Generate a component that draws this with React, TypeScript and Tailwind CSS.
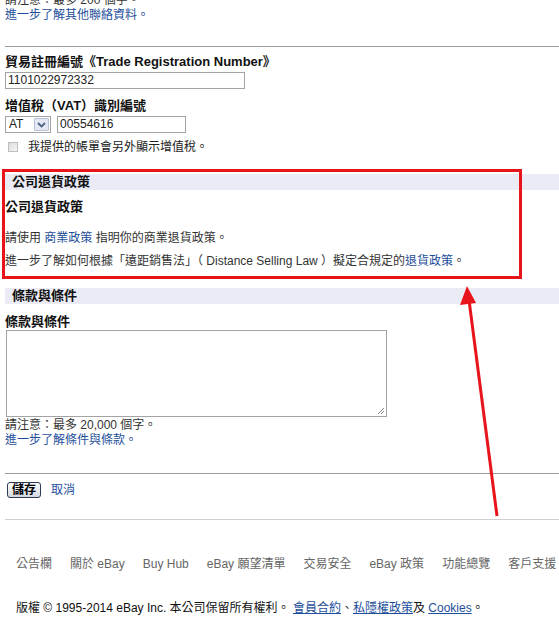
import React from "react";

const footerLinks = ["公告欄", "關於 eBay", "Buy Hub", "eBay 願望清單", "交易安全", "eBay 政策", "功能總覽", "客戶支援"];

export default function App() {
  return (
    <div className="relative w-[559px] h-[618px] overflow-hidden bg-white text-[12px] text-[#333] font-['Liberation_Sans','Noto_Sans_CJK_TC',sans-serif]">
      {/* --- TOP (CONTACT NOTE) --- */}
      <div className="pl-[5px] -mt-[7px] leading-[15px]">
        <p>請注意：最多 200 個字。</p>
        <a className="text-[#1d4e9a]">進一步了解其他聯絡資料。</a>
      </div>

      <div className="ml-[5px] mt-[23px] border-t border-[#9a9a9a]" />

      {/* --- TRADE REGISTRATION --- */}
      <div className="pl-[5px]">
        <p className="mt-[7px] h-[16px] leading-[16px] text-[13px] font-bold text-[#111]">貿易註冊編號《Trade Registration Number》</p>
        <div className="mt-[2px] w-[240px] h-[17px] border border-[#a3a3a3] px-[2px] text-[12px] leading-[15px] text-[#222]">1101022972332</div>

        <p className="mt-[9px] h-[16px] leading-[16px] text-[13px] font-bold text-[#111]">增值稅（VAT）識別編號</p>
        <div className="mt-[2px] flex items-center gap-[6px]">
          <div className="flex w-[46px] h-[17px] border border-[#a3a3a3] items-center justify-between pl-[3px] pr-[1px]">
            <span className="leading-[15px] text-[#222]">AT</span>
            <span className="flex items-center justify-center w-[15px] h-[13px] border border-[#b7c2d6] bg-[#e3e9f4] rounded-[1px]">
              <svg width="9" height="6" viewBox="0 0 9 6">
                <path d="M1 1 L4.5 4.5 L8 1" fill="none" stroke="#4d6185" strokeWidth="1.8" />
              </svg>
            </span>
          </div>
          <div className="w-[129px] h-[17px] border border-[#a3a3a3] px-[2px] leading-[15px] text-[#222]">00554616</div>
        </div>

        <div className="mt-[7px] h-[14px] flex items-center">
          <span className="ml-[3px] w-[10px] h-[10px] border border-[#bdbdbd] bg-gradient-to-br from-[#dcdcdc] to-[#f6f6f6]" />
          <span className="ml-[10px] leading-[14px] text-[#222]">我提供的帳單會另外顯示增值稅。</span>
        </div>
      </div>

      {/* --- RETURN POLICY --- */}
      <div className="ml-[5px] mt-[20px] h-[16px] bg-[#ebebf5] pl-[7px] text-[13px] font-bold leading-[16px] text-[#111]">公司退貨政策</div>
      <div className="pl-[5px]">
        <p className="mt-[9px] h-[16px] leading-[16px] text-[13px] font-bold text-[#111]">公司退貨政策</p>
        <p className="mt-[15px] h-[16px] leading-[16px]">
          請使用 <a className="text-[#1d4e9a]">商業政策</a> 指明你的商業退貨政策。
        </p>
        <p className="mt-[7px] h-[16px] leading-[16px] whitespace-nowrap">
          進一步了解如何根據「遠距銷售法」（ Distance Selling Law ）擬定合規定的<a className="text-[#1d4e9a]">退貨政策</a>。
        </p>
      </div>

      {/* --- TERMS --- */}
      <div className="ml-[5px] mt-[19px] h-[16px] bg-[#ebebf5] pl-[7px] text-[13px] font-bold leading-[16px] text-[#111]">條款與條件</div>
      <div className="pl-[5px]">
        <p className="mt-[10px] h-[16px] leading-[16px] text-[13px] font-bold text-[#111]">條款與條件</p>
        <div className="relative ml-[1px] w-[381px] h-[87px] border border-[#a3a3a3]">
          <svg className="absolute right-[1px] bottom-[1px]" width="8" height="8" viewBox="0 0 8 8">
            <path d="M7 1 L1 7 M7 4 L4 7" stroke="#888" strokeWidth="1" />
          </svg>
        </div>
        <div className="mt-[1px] leading-[15px]">
          <p>請注意：最多 20,000 個字。</p>
          <a className="text-[#1d4e9a]">進一步了解條件與條款。</a>
        </div>
      </div>

      <div className="ml-[5px] mt-[25px] border-t border-[#9a9a9a]" />

      <div className="pl-[7px] mt-[8px] flex items-center gap-[10px]">
        <button className="h-[16px] w-[34px] border border-[#2e3a55] rounded-[3px] bg-gradient-to-b from-white to-[#d3d7e0] text-[12px] leading-[14px] font-bold text-black">儲存</button>
        <a className="text-[#1d4e9a] leading-[16px]">取消</a>
      </div>

      <div className="ml-[5px] mt-[21px] border-t border-[#cfcfcf]" />

      {/* --- FOOTER --- */}
      <div className="mt-[36px] pl-[16px] flex gap-[18px] h-[16px] leading-[16px] text-[#666] whitespace-nowrap">
        {footerLinks.map((l) => (
          <span key={l}>{l}</span>
        ))}
      </div>
      <p className="mt-[28px] pl-[16px] h-[16px] leading-[16px] text-[#111] whitespace-nowrap">
        版權 © 1995-2014 eBay Inc. 本公司保留所有權利。 <a className="text-[#1d4e9a] underline">會員合約</a>、<a className="text-[#1d4e9a] underline">私隱權政策</a>及 <a className="text-[#1d4e9a] underline">Cookies</a>。
      </p>

      {/* --- ANNOTATION OVERLAY --- */}
      <div className="absolute left-[2px] top-[169px] w-[520px] h-[110px] border-[3px] border-[#e8141b]" />
      <svg className="absolute left-0 top-0 pointer-events-none" width="559" height="618" viewBox="0 0 559 618">
        <line x1="497" y1="516" x2="469" y2="300" stroke="#e8141b" strokeWidth="3" />
        <polygon points="467,286 460,305 476,303" fill="#e8141b" />
      </svg>
    </div>
  );
}
